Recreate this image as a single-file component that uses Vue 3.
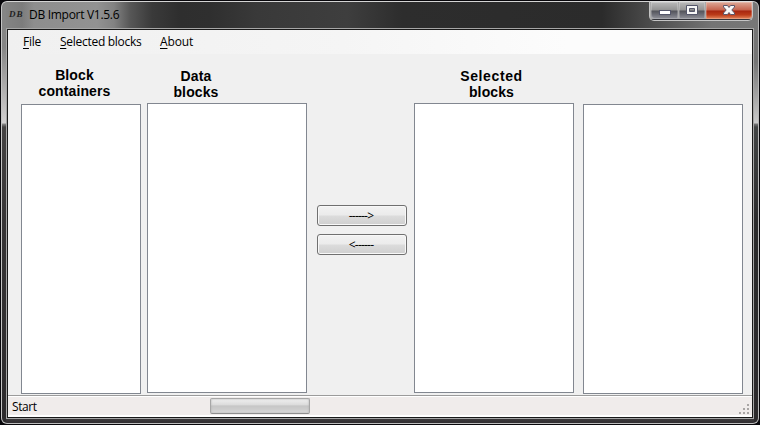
<script setup>
const menus = [
  { key: 'F', rest: 'ile', cls: 'm-file' },
  { key: 'S', rest: 'elected blocks', cls: 'm-sel' },
  { key: 'A', rest: 'bout', cls: 'm-about' },
]
</script>

<template>
  <div class="desktop">
    <div class="window">
      <header class="titlebar">
        <span class="logo">DB</span>
        <span class="title">DB Import V1.5.6</span>
        <div class="controls">
          <button class="ctl min" aria-label="Minimize">
            <svg width="27" height="17" viewBox="0 0 27 17"><rect x="8.500" y="8.500" width="11" height="4" fill="#fff" stroke="#54566a" /></svg>
          </button>
          <button class="ctl max" aria-label="Maximize">
            <svg width="26" height="17" viewBox="0 0 26 17"><path fill-rule="evenodd" d="M7.500 3.500h11v9h-11zM10.500 6.500h5v3h-5z" fill="#f6f6f6" stroke="#54566a" /></svg>
          </button>
          <button class="ctl close" aria-label="Close">
            <svg width="46" height="17" viewBox="0 0 46 17"><path d="M17.500 3.500h4l1.500 2 1.500-2h4v1.500l-2.700 3 2.700 3v1.500h-4l-1.500-2-1.500 2h-4v-1.500l2.700-3-2.700-3z" fill="#f8f8f8" stroke="#5c5568" /></svg>
          </button>
        </div>
      </header>

      <div class="client">
        <nav class="menubar">
          <span v-for="m in menus" :key="m.key" class="item" :class="m.cls"><u>{{ m.key }}</u>{{ m.rest }}</span>
        </nav>

        <main class="content">
          <section class="col first low">
            <h2>Block<br />containers</h2>
            <div class="list"></div>
          </section>
          <section class="col data">
            <h2>Data<br />blocks</h2>
            <div class="list"></div>
          </section>
          <div class="moves">
            <button class="move"><span>------&gt;</span></button>
            <button class="move"><span>&lt;------</span></button>
          </div>
          <section class="col selected">
            <h2><span class="wide">Selected</span><br />blocks</h2>
            <div class="list"></div>
          </section>
          <section class="col last low">
            <h2></h2>
            <div class="list"></div>
          </section>
        </main>

        <footer class="status">
          <span class="start">Start</span>
          <div class="progress"></div>
          <svg class="grip" width="11" height="11" viewBox="0 0 11 11" fill="#a9a6a5">
            <path d="M8 0h2v2h-2zM4 4h2v2h-2zM8 4h2v2h-2zM0 8h2v2h-2zM4 8h2v2h-2zM8 8h2v2h-2z" />
          </svg>
        </footer>
      </div>
    </div>
  </div>
</template>

<style>
body { margin: 0; background: #000; overflow: hidden; }
</style>

<style scoped>
* { box-sizing: border-box; }
.desktop {
  width: 760px;
  height: 425px;
  padding: 1px;
  background: #08070b;
  font-family: "Open Sans", "Noto Sans", sans-serif;
  font-size: 12px;
  color: #000;
}
.window {
  width: 758px;
  height: 423px;
  border: 1px solid #cfcfcf;
  border-color: #d4d4d4 #b9b9b9 #bcbcbc #c4c4c4;
  border-radius: 6px;
  padding: 0 4px 4px;
  background:
    linear-gradient(#858585 0, #858585 45px, #d2d0d0 121px, #888 122px, #454343 125px, #373536 220px, #2c2a2c) 0 28px / 4px 100% no-repeat,
    linear-gradient(#757575 0, #757575 32px, #c9c9c9 93px, #777 94px, #434545 97px, #2b2b2b 192px, #2c2a2c) 100% 28px / 4px 100% no-repeat,
    linear-gradient(#3a383a, #302d31) 0 100% / 100% 4px no-repeat,
    linear-gradient(90deg, #858585 0, #7c7c7c 20px, #8e8e8e 32px, #929292 95px, #828282 112px, #575757 128px, #3a3a3a 150px, #2e2e2e 178px, #2f2f2f 208px, #393939 255px, #3e3e3e 345px, #2d2d2d 400px, #2b2b2b 600px, #505050 655px, #747474 710px, #777 100%);
  background-position: 0 0, 100% 28px, 0 100%, 0 0;
}
.titlebar {
  height: 26px;
  display: flex;
  align-items: flex-start;
}
.logo {
  width: 17px;
  margin: 6px 0 0 3px;
  font: italic bold 9px/13px "Liberation Serif", serif;
  letter-spacing: 1px;
  color: #222;
}
.title {
  margin: 4px 0 0 3px;
  line-height: 17px;
  letter-spacing: -.29px;
  white-space: nowrap;
}
.controls {
  display: flex;
  gap: 1px;
  margin: -1px 1px 0 auto;
  width: 104px;
  height: 20px;
  padding: 0 1px 1px;
  border: 1px solid #c4c4c4;
  border-top-color: #e0e0e0;
  border-radius: 0 0 5px 5px;
  background: linear-gradient(#aaa, #aaa) 0 0 / 100% 17px no-repeat, #33343a;
}
.ctl {
  display: block;
  height: 17px;
  padding: 0;
  border: 0;
  flex: none;
  box-shadow: inset 0 0 0 1px rgba(255,255,255,.22);
}
.ctl svg { display: block; }
.min { width: 27px; border-radius: 0 0 0 4px; background: linear-gradient(#bababa, #929292 48%, #52535a 52%, #6e6f78 75%, #92939a); }
.max { width: 26px; background: linear-gradient(#bababa, #929292 48%, #52535a 52%, #6e6f78 75%, #92939a); }
.close { width: 46px; border-radius: 0 0 4px; background: linear-gradient(#dea998, #c5624c 48%, #a72510 52%, #bb3b19 75%, #e4875d); }
.client {
  height: 389px;
  border: 1px solid #191919;
  outline: 1px solid #a6a6a6;
  margin: 1px 1px 0;
  background: #f0f0f0;
  display: flex;
  flex-direction: column;
}
.menubar {
  height: 24px;
  display: flex;
  padding-left: 15px;
  line-height: 24px;
  background: linear-gradient(90deg, #f0f0f0, #f5f5f5 45%, #fcfcfc 75%);
}
.item { white-space: nowrap; letter-spacing: -.28px; }
.item u { text-underline-offset: 2px; text-decoration-thickness: 1px; }
.m-file { width: 37px; }
.m-sel { width: 100px; }
.m-about { letter-spacing: -.15px; }
.content {
  flex: 1;
  display: flex;
  padding: 13px 0 0 13px;
}
.col { display: flex; flex-direction: column; width: 160px; }
.col h2 {
  margin: 0;
  height: 36px;
  padding-top: 1px;
  text-align: center;
  font: bold 14px/16px "Liberation Sans", Arial, sans-serif;
  letter-spacing: .12px;
}
.col .wide { letter-spacing: .6px; }
.low h2 { height: 37px; padding-top: 0; }
.list {
  height: 290px;
  background: #fff;
  border: 1px solid #828790;
}
.first { width: 120px; margin-right: 6px; }
.first h2 { padding-right: 13px; }
.data h2 { padding-right: 62px; }
.selected { margin-right: 9px; }
.selected h2 { padding-right: 5px; }
.moves {
  width: 107px;
  padding: 138px 7px 0 10px;
  display: flex;
  flex-direction: column;
  gap: 8px;
}
.move {
  width: 90px;
  height: 21px;
  flex: none;
  padding: 0 2px 0 0;
  border: 1px solid #707070;
  border-radius: 3px;
  background: linear-gradient(#f2f2f2, #ebebeb 48%, #dcdcdc 52%, #cfcfcf);
  box-shadow: inset 0 0 0 1px #f8f8f8;
  font: 12px/17px "Open Sans", sans-serif;
  letter-spacing: -.8px;
  color: #000;
}
.status {
  height: 22px;
  border-top: 1px solid #9b9b9b;
  box-shadow: inset 0 1px #fff, inset 0 -2px #fff;
  background: #f0eceb;
  display: flex;
  align-items: flex-start;
}
.start { width: 198px; padding-left: 4px; line-height: 22px; letter-spacing: -.45px; }
.progress {
  margin: 2px 0 0 4px;
  width: 100px;
  height: 16px;
  border: 1px solid #a7a7a7;
  border-bottom-color: #8f8f8f;
  border-radius: 2px;
  background: linear-gradient(#f0f0f0, #dcdcdc 40%, #c6c6c6 50%, #cdcdcd 75%, #dcdcdc);
  box-shadow: inset 0 0 2px #aaa;
}
.grip { margin: 8px 2px 0 auto; }
</style>
